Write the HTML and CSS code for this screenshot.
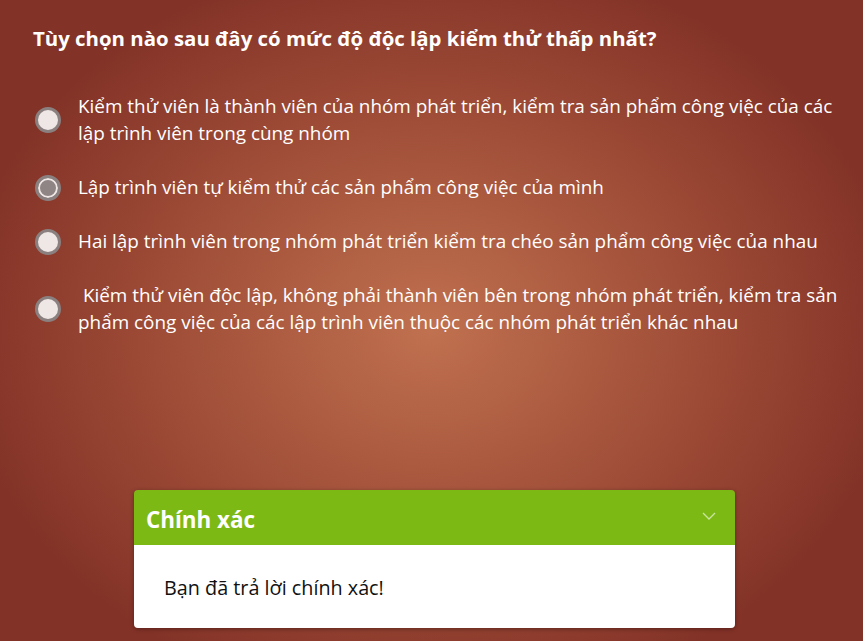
FILE: index.html
```html
<!DOCTYPE html>
<html lang="vi">
<head>
<meta charset="utf-8">
<link rel="stylesheet" href="styles.css">
</head>
<body>
<main class="quiz">
  <h1 class="question">Tùy chọn nào sau đây có mức độ độc lập kiểm thử thấp nhất?</h1>
  <ul class="options">
    <li class="option"><span class="radio"></span><span class="label">Kiểm thử viên là thành viên của nhóm phát triển, kiểm tra sản phẩm công việc của các lập trình viên trong cùng nhóm</span></li>
    <li class="option"><span class="radio checked"></span><span class="label">Lập trình viên tự kiểm thử các sản phẩm công việc của mình</span></li>
    <li class="option"><span class="radio"></span><span class="label">Hai lập trình viên trong nhóm phát triển kiểm tra chéo sản phẩm công việc của nhau</span></li>
    <li class="option"><span class="radio"></span><span class="label">&nbsp;Kiểm thử viên độc lập, không phải thành viên bên trong nhóm phát triển, kiểm tra sản phẩm công việc của các lập trình viên thuộc các nhóm phát triển khác nhau</span></li>
  </ul>
  <section class="feedback">
    <header class="fb-head">
      <span class="fb-title">Chính xác</span>
      <svg class="chev" width="14" height="8" viewBox="0 0 14 8"><path d="M1 1 L7 7 L13 1" fill="none" stroke="#c9e6a0" stroke-width="1.3"/></svg>
    </header>
    <div class="fb-body">Bạn đã trả lời chính xác!</div>
  </section>
</main>
</body>
</html>
```
FILE: styles.css
```css
html, body {
  margin: 0;
  height: 100%;
}
body {
  background: radial-gradient(ellipse 470px 380px at 430px 330px, #c0714f 0%, #a04e38 55%, #833227 100%);
  background-color: #833227;
  font-family: "Open Sans", "Noto Sans", sans-serif;
  color: #fff;
  overflow: hidden;
}
.quiz {
  padding: 24px 20px 0 33px;
  display: flex;
  flex-direction: column;
}
.question {
  margin: 0;
  font-size: 20.4px;
  font-weight: 700;
  line-height: 28px;
}
.options {
  list-style: none;
  margin: 41px 0 0;
  padding: 0;
  display: flex;
  flex-direction: column;
  gap: 27px;
}
.option {
  display: flex;
  align-items: center;
  gap: 17px;
}
.radio {
  flex: none;
  width: 20px;
  height: 20px;
  border: 3px solid #8b8080;
  border-radius: 50%;
  background: #efe6e6;
  margin-left: 2px;
}
.radio.checked {
  background: #908585;
  box-shadow: inset 0 0 0 2px #efe6e6;
}
.label {
  font-size: 18.9px;
  line-height: 27px;
}
.feedback {
  margin: 154px 0 0 101px;
  width: 601px;
  border-radius: 4px;
  overflow: hidden;
  box-shadow: 0 1px 4px rgba(0,0,0,0.35);
}
.fb-head {
  height: 55px;
  background: #7db914;
  display: flex;
  align-items: center;
  justify-content: space-between;
  padding: 0 19px 0 12px;
}
.fb-title {
  font-size: 22.4px;
  font-weight: 700;
  margin-top: 4px;
}
.chev { margin-top: -4px; }
.fb-body {
  background: #fff;
  color: #111;
  height: 83px;
  box-sizing: border-box;
  padding: 29px 30px 0;
  font-size: 19.8px;
  line-height: 27px;
}
```
